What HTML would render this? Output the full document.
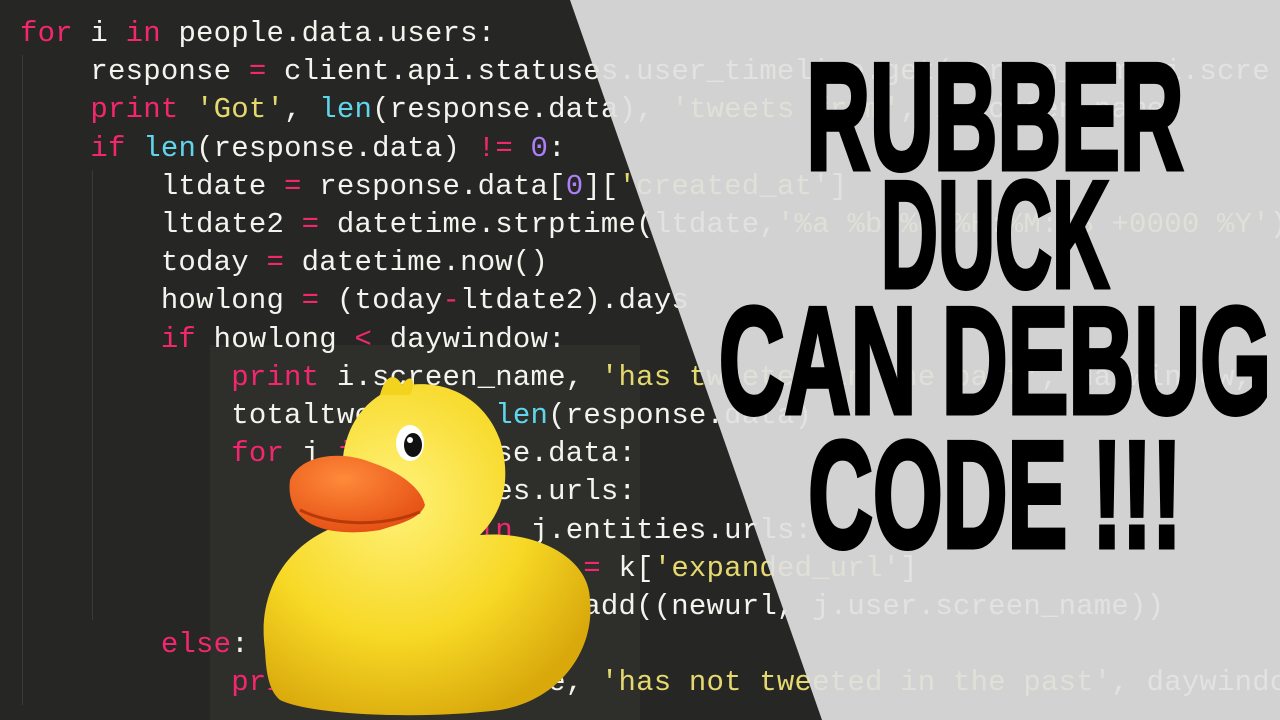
<!DOCTYPE html>
<html><head><meta charset="utf-8"><style>
html,body{margin:0;padding:0}
body{width:1280px;height:720px;overflow:hidden;position:relative;background:#262624;font-family:"Liberation Mono",monospace}
#code{position:absolute;left:20px;top:15px;font-size:29px;line-height:38.2px;color:#f4f4ee;white-space:pre;letter-spacing:0.2px}
.k{color:#f3266f}.b{color:#5fd6ec}.s{color:#e4d86e}.n{color:#ad7ff8}
#hl{position:absolute;left:210px;top:345px;width:430px;height:375px;background:#2e2e2b}
#grey{position:absolute;inset:0;background:rgba(224,224,224,0.93);clip-path:polygon(570px 0,1280px 0,1280px 720px,822px 720px)}
.g{position:absolute;width:1px;background:#3a3a37}
.t{position:absolute;left:0;width:1990px;text-align:center;font-family:"Liberation Sans",sans-serif;font-weight:bold;color:#000;font-size:152px;line-height:150px;white-space:nowrap;-webkit-text-stroke:5px #000;transform-origin:995px 0}
</style></head><body>
<div id="hl"></div>
<div class="g" style="left:22px;top:55px;height:650px"></div>
<div class="g" style="left:92px;top:170px;height:450px"></div>
<div id="code"><span class="k">for</span> i <span class="k">in</span> people.data.users:
    response <span class="k">=</span> client.api.statuses.user_timeline.get(screen_name=i.scre
    <span class="k">print</span> <span class="s">'Got'</span>, <span class="b">len</span>(response.data), <span class="s">'tweets from'</span>, i.screen_name
    <span class="k">if</span> <span class="b">len</span>(response.data) <span class="k">!=</span> <span class="n">0</span>:
        ltdate <span class="k">=</span> response.data[<span class="n">0</span>][<span class="s">'created_at'</span>]
        ltdate2 <span class="k">=</span> datetime.strptime(ltdate,<span class="s">'%a %b %d %H:%M:%S +0000 %Y'</span>)
        today <span class="k">=</span> datetime.now()
        howlong <span class="k">=</span> (today<span class="k">-</span>ltdate2).days
        <span class="k">if</span> howlong <span class="k">&lt;</span> daywindow:
            <span class="k">print</span> i.screen_name, <span class="s">'has tweeted in the past'</span>, daywindow,
            totaltweets <span class="k">+=</span> <span class="b">len</span>(response.data)
            <span class="k">for</span> j <span class="k">in</span> response.data:
                <span class="k">if</span> j.entities.urls:
                    <span class="k">for</span> k <span class="k">in</span> j.entities.urls:
                         newurl <span class="k">=</span> k[<span class="s">'expanded_url'</span>]
                         urlset.add((newurl, j.user.screen_name))
        <span class="k">else</span>:
            <span class="k">print</span> i.screen_name, <span class="s">'has not tweeted in the past'</span>, daywindow</div>
<div id="grey"></div>
<svg style="position:absolute;left:0;top:0" width="1280" height="720">
 <defs>
  <radialGradient id="y" cx="0.4" cy="0.35" r="0.7"><stop offset="0" stop-color="#fff27a"/><stop offset="0.6" stop-color="#f7d825"/><stop offset="1" stop-color="#d9a90c"/></radialGradient>
  <radialGradient id="o" cx="0.4" cy="0.3" r="0.8"><stop offset="0" stop-color="#ff8a3a"/><stop offset="1" stop-color="#e24a10"/></radialGradient>
 </defs>
 <path d="M265 650 C255 580 300 530 360 520 C330 480 340 420 380 395 C420 372 480 385 500 440 C515 490 495 520 480 535 C540 530 590 560 590 600 C595 650 560 700 500 710 C420 720 310 715 280 700 C268 690 266 670 265 650Z" fill="url(#y)"/>
 <path d="M380 395 C385 375 395 372 402 385 C410 372 418 380 410 395Z" fill="#f3d31e"/>
 <path d="M290 480 C300 455 340 450 370 462 C395 470 420 485 425 505 C420 520 395 525 380 530 C350 535 320 532 305 520 C292 510 288 495 290 480Z" fill="url(#o)"/>
 <path d="M300 510 C330 525 380 528 420 512" stroke="#b83a08" stroke-width="3" fill="none"/>
 <ellipse cx="410" cy="443" rx="14" ry="18" fill="#fff"/>
 <ellipse cx="413" cy="445" rx="9" ry="12" fill="#111"/>
 <circle cx="410" cy="440" r="3" fill="#fff"/>
</svg>
<div class="t" style="top:42px;transform:scaleX(0.58)">RUBBER</div>
<div class="t" style="top:160px;transform:scaleX(0.52)">DUCK</div>
<div class="t" style="top:286px;transform:scaleX(0.6)">CAN DEBUG</div>
<div class="t" style="top:420px;transform:scaleX(0.59)">CODE !!!</div>
</body></html>
